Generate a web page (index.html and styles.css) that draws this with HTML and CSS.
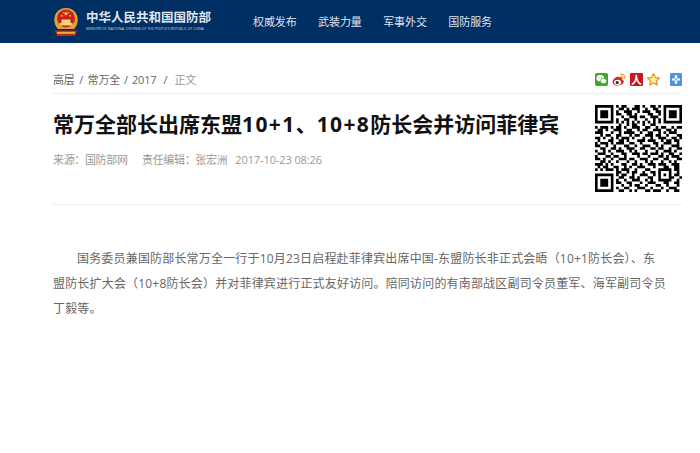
FILE: index.html
```html
<!DOCTYPE html>
<html lang="zh-CN">
<head>
<meta charset="utf-8">
<title>常万全部长出席东盟10+1、10+8防长会并访问菲律宾</title>
<link rel="stylesheet" href="styles.css">
</head>
<body>
<header class="top">
  <div class="brand">
    <svg class="emblem" width="26" height="30" viewBox="0 0 26 30">
      <path d="M5 22C-2 15 1 1 13 1s15 14 8 21z" fill="#d9a834"/>
      <circle cx="13" cy="11.5" r="9" fill="#c9201d"/>
      <path d="M13 4l.7 1.8h1.8l-1.5 1.1.6 1.8-1.6-1.1-1.6 1.1.6-1.8-1.5-1.1h1.8z" fill="#f3cf55"/>
      <path d="M8 8h1.6v1.6H8zM16.4 8H18v1.6h-1.6zM9.8 5.2h1v1h-1zM15.2 5.2h1v1h-1z" fill="#f3cf55"/>
      <path d="M6.5 16h13v2.5h-13zM8.5 12.5h9V16h-9z" fill="#f0d47a"/>
      <path d="M1.5 23.5h23l-2.5 5.5H4z" fill="#c9201d"/>
      <path d="M4 24.8h18v2H4z" fill="#e0b23e"/>
    </svg>
    <div class="brand-text">
      <div class="brand-cn">中华人民共和国国防部</div>
      <div class="brand-en">MINISTRY OF NATIONAL DEFENSE OF THE PEOPLE'S REPUBLIC OF CHINA</div>
    </div>
  </div>
  <nav class="nav"><a>权威发布</a><a>武装力量</a><a>军事外交</a><a>国防服务</a></nav>
</header>
<main class="page">
  <div class="crumbs">
    <div class="trail"><span>高层</span><i>/</i><span>常万全</span><i class="mid">/</i><span>2017</span><i class="wide">/</i><span class="cur">正文</span></div>
    <div class="share">
      <svg width="13" height="13" viewBox="0 0 13 13"><rect width="13" height="13" rx="2" fill="#3fa62c"/><ellipse cx="5.2" cy="5.2" rx="3.8" ry="3.1" fill="#fff"/><ellipse cx="8.6" cy="8" rx="3.1" ry="2.6" fill="#fff" stroke="#3fa62c" stroke-width=".6"/><circle cx="3.9" cy="4.4" r=".5" fill="#3fa62c"/><circle cx="6.4" cy="4.4" r=".5" fill="#3fa62c"/></svg>
      <svg width="14" height="13" viewBox="0 0 14 13"><path d="M5.6 3.6C2.8 4.6.4 7 .6 9.2c.2 2.4 3 3.6 5.6 3.4 2.8-.2 5.6-1.8 5.6-4 0-1.2-1-1.9-2-2.1.5-1.4 0-2.2-1-2.2-.8 0-2 .3-3.2-.7z" fill="#d8232a"/><ellipse cx="5.6" cy="9.3" rx="3.5" ry="2.6" fill="#fff"/><circle cx="5.2" cy="9.5" r="1.5" fill="#222"/><path d="M8.4 1.2c2.6-.6 5 1.8 4.4 4.6M8.8 3.4c1.3-.3 2.3.8 2 2" fill="none" stroke="#f29a2e" stroke-width="1.1" stroke-linecap="round"/></svg>
      <span class="renren">人</span>
      <svg width="13" height="13" viewBox="0 0 13 13"><path d="M6.5.5l1.8 3.9 4.2.5-3.1 2.9.8 4.2-3.7-2.1-3.7 2.1.8-4.2L.5 4.9l4.2-.5z" fill="#fff2b8" stroke="#eda128" stroke-width="1.5" stroke-linejoin="round"/></svg>
      <svg class="plus" width="12" height="13" viewBox="0 0 12 13"><rect width="12" height="13" rx="1" fill="#4d94e6"/><path d="M4.8 2.2h2.4v3.3h-2.4zM4.8 7.5h2.4v3.3h-2.4zM2 5.4h3.2v2.2H2zM6.8 5.4H10v2.2H6.8z" fill="#fff"/></svg>
    </div>
  </div>
  <div class="head">
    <div class="head-main">
      <h1>常万全部长出席东盟<span class="num">10+1</span>、<span class="num">10+8</span>防长会并访问菲律宾</h1>
      <div class="meta"><span>来源：国防部网</span><span>责任编辑：张宏洲</span><span>2017-10-23 08:26</span></div>
    </div>
    <svg class="qr" width="87" height="87" viewBox="0 0 33 33" aria-label="QR code">
      <path fill="none" stroke="#000" stroke-width="1" d="M0 .5h7M8 .5h1M10 .5h2M15 .5h2M18 .5h1M21 .5h2M24 .5h1M26 .5h7
M0 1.5h1M6 1.5h1M9 1.5h2M12 1.5h1M14 1.5h3M19 1.5h1M22 1.5h2M26 1.5h1M32 1.5h1
M0 2.5h1M2 2.5h3M6 2.5h1M8 2.5h1M11 2.5h3M16 2.5h1M18 2.5h3M23 2.5h2M26 2.5h1M28 2.5h3M32 2.5h1
M0 3.5h1M2 3.5h3M6 3.5h1M8 3.5h2M12 3.5h2M15 3.5h1M20 3.5h2M24 3.5h1M26 3.5h1M28 3.5h3M32 3.5h1
M0 4.5h1M2 4.5h3M6 4.5h1M10 4.5h1M13 4.5h3M17 4.5h2M21 4.5h3M26 4.5h1M28 4.5h3M32 4.5h1
M0 5.5h1M6 5.5h1M8 5.5h1M11 5.5h2M15 5.5h1M19 5.5h1M22 5.5h1M24 5.5h1M26 5.5h1M32 5.5h1
M0 6.5h7M8 6.5h1M10 6.5h1M12 6.5h1M14 6.5h1M16 6.5h1M18 6.5h1M20 6.5h1M22 6.5h1M24 6.5h1M26 6.5h7
M9 7.5h1M12 7.5h1M14 7.5h2M18 7.5h1M21 7.5h2
M0 8.5h1M2 8.5h3M6 8.5h1M8 8.5h2M11 8.5h1M14 8.5h3M19 8.5h2M23 8.5h1M25 8.5h2M29 8.5h1M31 8.5h2
M1 9.5h2M4 9.5h1M7 9.5h3M12 9.5h2M16 9.5h1M18 9.5h2M22 9.5h3M27 9.5h2M30 9.5h1
M0 10.5h3M6 10.5h1M9 10.5h1M11 10.5h4M17 10.5h1M20 10.5h2M24 10.5h1M26 10.5h1M28 10.5h3
M2 11.5h1M4 11.5h2M8 11.5h2M13 11.5h1M15 11.5h2M19 11.5h3M23 11.5h2M27 11.5h1M31 11.5h2
M0 12.5h2M3 12.5h1M6 12.5h1M8 12.5h1M10 12.5h3M14 12.5h1M18 12.5h1M21 12.5h1M24 12.5h3M29 12.5h2M32 12.5h1
M1 13.5h1M5 13.5h2M9 13.5h2M12 13.5h1M16 13.5h3M20 13.5h3M25 13.5h1M27 13.5h2M30 13.5h2
M0 14.5h1M2 14.5h3M6 14.5h1M8 14.5h3M13 14.5h2M17 14.5h1M22 14.5h2M26 14.5h3M31 14.5h1
M0 15.5h2M4 15.5h1M7 15.5h1M11 15.5h2M15 15.5h1M18 15.5h3M23 15.5h1M25 15.5h1M29 15.5h3
M2 16.5h2M6 16.5h2M9 16.5h1M12 16.5h3M17 16.5h2M21 16.5h2M24 16.5h2M28 16.5h1M31 16.5h2
M0 17.5h1M3 17.5h1M5 17.5h1M8 17.5h3M13 17.5h1M15 17.5h1M19 17.5h1M23 17.5h1M26 17.5h3M30 17.5h1
M1 18.5h3M6 18.5h1M10 18.5h2M14 18.5h3M18 18.5h2M21 18.5h3M25 18.5h1M28 18.5h2M32 18.5h1
M0 19.5h1M4 19.5h2M7 19.5h2M11 19.5h1M16 19.5h1M20 19.5h1M24 19.5h2M27 19.5h1M29 19.5h3
M0 20.5h2M3 20.5h1M6 20.5h1M9 20.5h3M13 20.5h2M17 20.5h3M22 20.5h2M26 20.5h2M31 20.5h2
M2 21.5h2M5 21.5h1M8 21.5h1M12 21.5h1M15 21.5h1M19 21.5h1M21 21.5h1M25 21.5h1M28 21.5h1M30 21.5h1
M0 22.5h3M4 22.5h1M6 22.5h1M10 22.5h2M14 22.5h2M17 22.5h1M20 22.5h3M24 22.5h3M29 22.5h3
M1 23.5h1M3 23.5h2M7 23.5h2M11 23.5h1M13 23.5h1M16 23.5h3M22 23.5h1M26 23.5h2M30 23.5h2
M0 24.5h1M2 24.5h1M4 24.5h3M8 24.5h1M10 24.5h3M15 24.5h1M19 24.5h2M24 24.5h5M30 24.5h2
M8 25.5h2M12 25.5h1M14 25.5h2M18 25.5h1M21 25.5h2M24 25.5h1M28 25.5h1M31 25.5h1
M0 26.5h7M8 26.5h1M10 26.5h2M14 26.5h1M17 26.5h3M22 26.5h1M24 26.5h1M26 26.5h1M28 26.5h1M30 26.5h2
M0 27.5h1M6 27.5h1M9 27.5h2M13 27.5h2M16 27.5h1M20 27.5h2M24 27.5h1M28 27.5h2M32 27.5h1
M0 28.5h1M2 28.5h3M6 28.5h1M8 28.5h1M11 28.5h1M14 28.5h3M19 28.5h1M21 28.5h1M24 28.5h5M31 28.5h1
M0 29.5h1M2 29.5h3M6 29.5h1M8 29.5h2M12 29.5h2M17 29.5h1M20 29.5h3M26 29.5h2M30 29.5h2
M0 30.5h1M2 30.5h3M6 30.5h1M10 30.5h1M13 30.5h1M15 30.5h2M19 30.5h1M23 30.5h2M27 30.5h1M31 30.5h1
M0 31.5h1M6 31.5h1M8 31.5h1M11 31.5h2M16 31.5h3M21 31.5h1M25 31.5h1M28 31.5h3
M0 32.5h7M9 32.5h2M13 32.5h1M15 32.5h1M19 32.5h2M22 32.5h3M27 32.5h1M30 32.5h2"/>
    </svg>
  </div>
  <article class="body">
    <p>国务委员兼国防部长常万全一行于10月23日启程赴菲律宾出席中国-东盟防长非正式会晤（10+1防长会）、东<br>盟防长扩大会（10+8防长会）并对菲律宾进行正式友好访问。陪同访问的有南部战区副司令员董军、海军副司令员<br>丁毅等。</p>
  </article>
</main>
</body>
</html>
```
FILE: styles.css
```css
* { box-sizing: border-box; }
html, body { margin: 0; padding: 0; }
body { background: #fff; font-family: "Open Sans", "Noto Sans CJK SC", sans-serif; }

.top { height: 43px; background: #002f64; display: flex; align-items: center; padding-left: 53px; }
.brand { display: flex; align-items: center; gap: 7px; width: 200px; }
.emblem { flex: none; }
.brand-cn { font-size: 12.5px; font-weight: 700; color: #dfe5ee; line-height: 14px; white-space: nowrap; }
.brand-en { font-size: 3.5px; color: #c8d2df; line-height: 6px; white-space: nowrap; margin-top: 1px; }
.nav { display: flex; gap: 21.5px; }
.nav a { font-size: 11px; line-height: 16px; letter-spacing: -.1px; color: #dfe5ee; }

.page { padding: 0 18px 0 53px; }

.crumbs { height: 51px; padding-top: 29px; font-size: 11px; line-height: 16px; letter-spacing: -.2px; color: #666; border-bottom: 1px solid #eee; display: flex; justify-content: space-between; align-items: flex-start; }
.trail { display: flex; }
.trail i { font-style: normal; width: 13px; text-align: center; }
.trail i.mid { width: 12px; }
.trail i.wide { width: 18px; }
.trail .cur { color: #999; }
.share { display: flex; align-items: center; gap: 4px; margin-top: 1px; }
.renren { width: 13px; height: 13px; background: #c4161c; border-radius: 1px; color: #fff; font-size: 11px; font-weight: 700; line-height: 13px; text-align: center; }
.plus { margin-left: 6px; }

.head { height: 111px; display: flex; justify-content: space-between; align-items: flex-start; border-bottom: 1px solid #eee; }
.head-main { padding-top: 15px; }
.qr { margin-top: 11px; flex: none; }
h1 { margin: 0; font-size: 21px; line-height: 30px; font-weight: 700; color: #111; white-space: nowrap; }
.num { letter-spacing: 1.4px; }
.meta { font-size: 11px; line-height: 16px; letter-spacing: -.35px; color: #999; display: flex; margin-top: 13px; }
.meta span:nth-child(2) { margin-left: 14.5px; }
.meta span:nth-child(3) { margin-left: 8px; letter-spacing: -.1px; }

.body { margin-top: 41px; }
.body p { margin: 0; width: 625px; font-size: 12px; letter-spacing: .18px; line-height: 25px; color: #666; text-indent: 24px; }
```
